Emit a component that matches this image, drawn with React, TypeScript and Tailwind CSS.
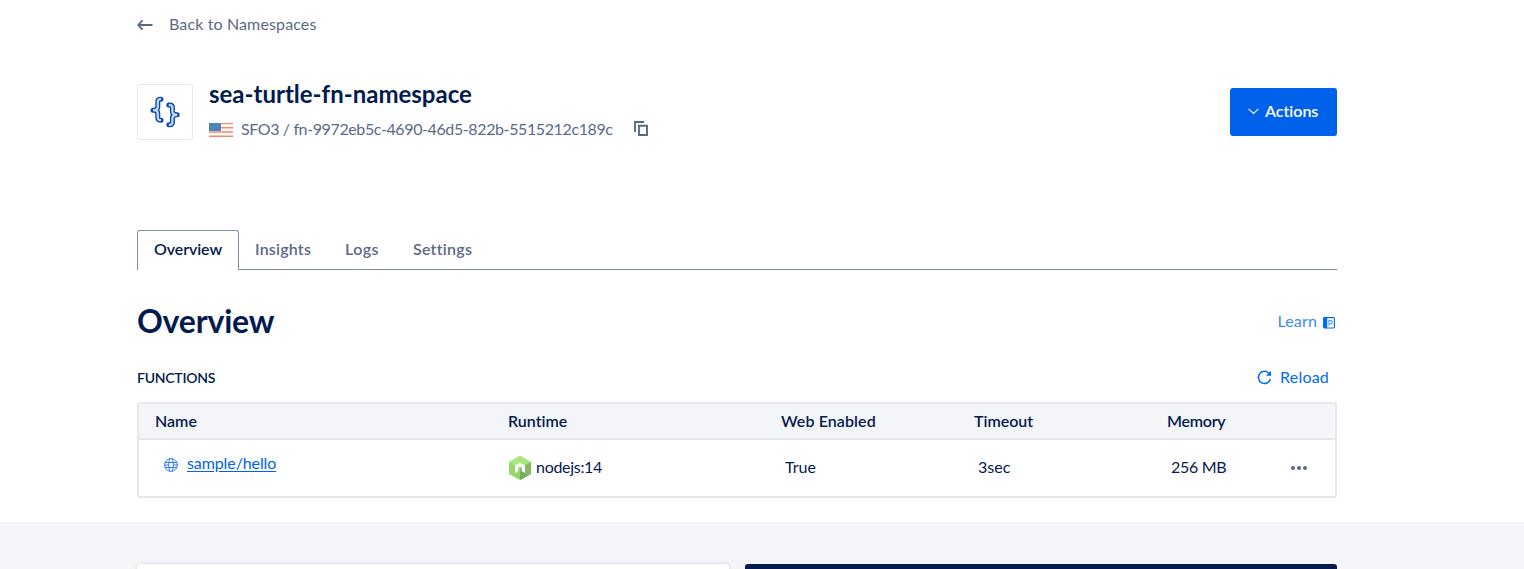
import type { ReactNode } from 'react';

function ArrowLeft() {
  return (
    <svg width="16" height="12" viewBox="0 0 16 12" fill="none" stroke="#5b6987" strokeWidth="1.8">
      <path d="M15.5 6H1.5M5.6 1.3 1.2 6l4.400 4.700" />
    </svg>
  );
}

function BracesIcon() {
  const left = 'M12 4.2H11.200Q8.800 4.200 8.800 6.800V12Q8.800 15.200 4 15.200Q8.800 15.200 8.800 18.400V22.600Q8.800 25.200 11.200 25.200H12';
  const right = 'M19.800 10H20.600Q23.400 10 23.400 12.600V16.600Q23.400 19.800 28.200 19.800Q23.400 19.800 23.400 23V27.200Q23.400 29.800 20.600 29.800H19.800';
  return (
    <svg width="32" height="34" viewBox="0 0 32 34" fill="none">
      <g stroke="#0a4aa8" strokeWidth="5" strokeLinecap="round" strokeLinejoin="round">
        <path d={left} />
        <path d={right} />
      </g>
      <g stroke="#c5dafb" strokeWidth="2.200">
        <path d={left} />
        <path d={right} />
      </g>
    </svg>
  );
}

function Flag() {
  return (
    <svg width="24" height="14" viewBox="0 0 24 14">
      <path fill="#fff" d="M0 0h24v14H0z" />
      <path fill="#ff8468" d="M0 0h24v1.300H0zM0 4h24v1.600H0zM0 8.200h24v1.600H0zM0 12.400h24V14H0z" />
      <path fill="#4c86b8" d="M0 0h12v8H0z" />
    </svg>
  );
}

function CopyIcon() {
  return (
    <svg width="14" height="15" viewBox="0 0 14 15" fill="none" stroke="#5b6987" strokeWidth="1.900">
      <path d="M1 11V1h9" />
      <path d="M5 4.800h8v9.200H5z" />
    </svg>
  );
}

function LearnIcon() {
  return (
    <svg width="12" height="12" viewBox="0 0 12 12" fill="none">
      <rect x=".6" y=".6" width="10.8" height="10.4" rx=".8" stroke="#0069ff" strokeWidth="1.1" />
      <path d="M.5.5h3.7v10.600H.5z" fill="#0069ff" />
      <path d="M6 8.800V3.500h2.200L9.400 5 8.200 6.800H6.400" stroke="#4b96ff" strokeWidth="1.100" />
    </svg>
  );
}

function ReloadIcon() {
  return (
    <svg width="15" height="15" viewBox="0 0 15 15" fill="none">
      <path d="M12.300 3.600A6.100 6.100 0 1 0 13.400 9" stroke="#0069ff" strokeWidth="1.500" />
      <path d="M14 .8v5H9z" fill="#0069ff" />
    </svg>
  );
}

function GlobeIcon() {
  return (
    <svg width="14" height="14" viewBox="0 0 14 14" fill="none" stroke="#2f7fea" strokeWidth="1">
      <circle cx="7" cy="7" r="6.400" />
      <path d="M5.600.800Q3.400 7 5.600 13.200M8.400.800Q10.600 7 8.400 13.200M1 4.500H13M1 9.500H13M.6 7h3.600M9.800 7h3.600" />
    </svg>
  );
}

function NodeIcon() {
  return (
    <svg width="22" height="24" viewBox="0 0 22 24">
      <path fill="#97d86b" d="M11 0 22 6v12l-11 6L0 18V6z" />
      <path fill="#a9e77d" d="M11 0 22 6 11 12 0 6z" />
      <path fill="#86b768" d="M22 6v12l-11 6V12z" />
      <path fill="#79aa5c" d="m12.500 14.500 6 5.400L11 24v-9z" />
      <path fill="#fff" d="M6 9.500 11 6.700l5 2.800V17l-3.300-2v-3.600L11 10.500l-1.700.9V15L6 17z" />
    </svg>
  );
}

function Th({ children, className }: { children: ReactNode; className: string }) {
  return <div className={`${className} shrink-0`}>{children}</div>;
}

export default function App() {
  return (
    <div className="h-[569px] overflow-hidden bg-white font-['Lato',sans-serif] text-base leading-6 whitespace-nowrap text-[#031b4e] [font-variant-ligatures:none]">
      <main className="ml-[137px] flex h-[522px] w-[1200px] flex-col">
        <a className="mt-3 flex h-6 items-center gap-4 tracking-[0.13px] text-[#5b6987]">
          <span className="pt-0.5"><ArrowLeft /></span>
          <span>Back to Namespaces</span>
        </a>

        <header className="mt-[48px] flex h-14 items-center justify-between">
          <div className="flex">
            <div className="flex size-14 items-center justify-center rounded-[3px] border border-[#e5e8ed]">
              <BracesIcon />
            </div>
            <div className="ml-4 flex flex-col">
              <h1 className="-mt-1 h-7 text-2xl leading-7 font-bold">sea-turtle-fn-namespace</h1>
              <div className="mt-[9px] flex h-6 items-center text-[#5b6987]">
                <span className="pt-[3px]"><Flag /></span>
                <span className="ml-2 tracking-[-0.39px]">SFO3 / fn-9972eb5c-4690-46d5-822b-5515212c189c</span>
                <span className="ml-[21px]"><CopyIcon /></span>
              </div>
            </div>
          </div>
          <button className="flex h-12 w-[107px] items-center rounded-[3px] bg-[#0061eb] pb-0.5 pl-[18px] font-semibold text-white">
            <svg width="11" height="7" viewBox="0 0 11 7" fill="none" stroke="#fff" strokeWidth="1.100"><path d="m.600.800 4.900 4.700L10.400.800" /></svg>
            <span className="ml-1.5">Actions</span>
          </button>
        </header>

        <nav className="mt-[90px] flex h-10 shrink-0 font-semibold text-[#5b6987]">
          <div className="flex w-[102px] items-center justify-center rounded-t-[3px] border border-b-0 border-[#7f8dae] pb-[3px] tracking-[-0.1px] text-[#031b4e]">Overview</div>
          <div className="flex flex-1 items-center gap-[34px] border-b border-[#7f8dae] pb-px pl-4">
            <span className="w-[56px] tracking-[0.2px]">Insights</span>
            <span className="w-[34px] tracking-[0.4px]">Logs</span>
            <span className="tracking-[0.25px]">Settings</span>
          </div>
        </nav>

        <div className="mt-[31px] flex h-10 items-center justify-between">
          <h2 className="text-[32px] leading-10 font-bold tracking-[-0.2px]">Overview</h2>
          <div className="flex items-center gap-1.5 pr-0.5 text-[#3d8bf5]">
            <span className="tracking-[0.15px]">Learn</span>
            <span className="pt-1"><LearnIcon /></span>
          </div>
        </div>

        <div className="mt-[25px] flex h-6 items-center justify-between pr-2">
          <h3 className="text-sm font-semibold tracking-[-0.25px]">FUNCTIONS</h3>
          <button className="flex items-center gap-2 pb-0.5 text-[#0069ff]">
            <ReloadIcon />
            <span className="tracking-[0.2px]">Reload</span>
          </button>
        </div>

        <div className="mt-3 h-24 rounded-[3px] border-2 border-[#e5e8ed]">
          <div className="flex h-9 items-center bg-[#f3f5f9] pb-0.5 pl-4 font-semibold shadow-[inset_0_-2px_0_#e5e8ed]">
            <Th className="w-[353px]">Name</Th>
            <Th className="w-[273px]">Runtime</Th>
            <Th className="w-[193px] tracking-[0.1px]">Web Enabled</Th>
            <Th className="w-[193px]">Timeout</Th>
            <Th className="w-24 tracking-[-0.25px]">Memory</Th>
          </div>
          <div className="flex h-14 items-center">
            <div className="flex w-[370px] items-center pb-[10px] pl-[25px] text-[#0061eb]">
              <span className="pt-[3px]"><GlobeIcon /></span>
              <a className="ml-[9px] tracking-[-0.1px] underline underline-offset-2">sample/hello</a>
            </div>
            <div className="flex w-[276px] items-center">
              <NodeIcon />
              <span className="ml-[5px] pb-0.5 tracking-[-0.3px]">nodejs:14</span>
            </div>
            <div className="w-[193px] pb-0.5">True</div>
            <div className="w-[193px] pb-0.5">3sec</div>
            <div className="w-[120px] pb-0.5 tracking-[-0.3px]">256 MB</div>
            <svg width="16" height="4" viewBox="0 0 16 4" fill="#5b6987"><circle cx="2" cy="2" r="2" /><circle cx="8" cy="2" r="2" /><circle cx="14" cy="2" r="2" /></svg>
          </div>
        </div>
      </main>

      <section className="flex h-[47px] gap-4 bg-[#f3f5f9] pt-[42px] pl-[137px]">
        <div className="h-10 w-[592px] rounded-[3px] bg-white shadow-[0_0_3px_rgba(3,27,78,0.2)]" />
        <div className="h-10 w-[592px] rounded-[3px] bg-[#031b4e]" />
      </section>
    </div>
  );
}
